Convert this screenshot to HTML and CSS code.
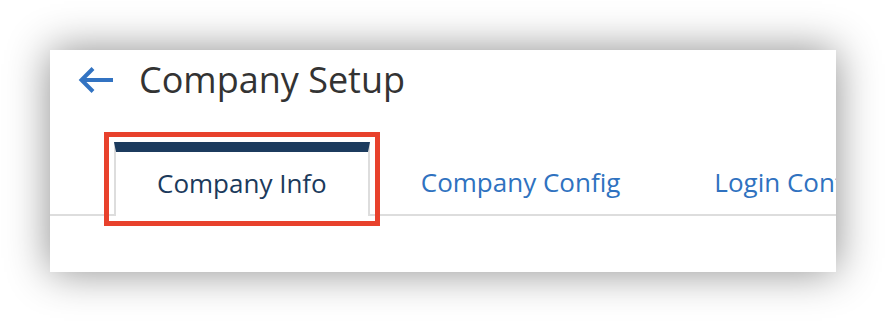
FILE: index.html
```html
<!DOCTYPE html>
<html>
<head>
<meta charset="utf-8">
<link rel="stylesheet" href="styles.css">
</head>
<body>
<div class="card">
  <div class="header">
    <svg class="back" width="36" height="28" viewBox="0 0 36 28" aria-hidden="true">
      <path d="M35 14H4M15 2.5L3.5 14L15 25.5" fill="none" stroke="#3273c2" stroke-width="4" stroke-linecap="butt" stroke-linejoin="miter"/>
    </svg>
    <h1 class="title">Company Setup</h1>
  </div>
  <div class="tabs">
    <div class="tab active">Company Info</div>
    <div class="tab">Company Config</div>
    <div class="tab">Login Configuration</div>
  </div>
</div>
</body>
</html>
```
FILE: styles.css
```css
html, body {
  margin: 0;
  padding: 0;
  background: #ffffff;
}
body {
  padding: 50px;
  font-family: "Open Sans", "Noto Sans", sans-serif;
  overflow: hidden;
  height: 322px;
  box-sizing: border-box;
}
.card {
  width: 786px;
  height: 222px;
  background: #fff;
  box-shadow: 0 0 40px rgba(0,0,0,0.45);
  overflow: hidden;
  box-sizing: border-box;
}
.header {
  display: flex;
  align-items: center;
  height: 60px;
  padding-left: 28px;
}
.back {
  display: block;
  flex: none;
}
.title {
  margin: 0 0 0 25px;
  font-weight: 400;
  font-size: 36px;
  color: #333333;
  line-height: 1;
}
.tabs {
  display: flex;
  gap: 8px;
  margin-top: 32px;
  padding-left: 64px;
  border-bottom: 2px solid #dddddd;
  height: 72px;
  white-space: nowrap;
}
.tab {
  padding: 0 41px 3px;
  font-size: 26px;
  color: #2f72c0;
  display: flex;
  align-items: center;
  border-top: 10px solid transparent;
  border-left: 2px solid transparent;
  border-right: 2px solid transparent;
  flex: none;
}
.active {
  color: #1b3a5c;
  border-top-color: #1c3b5e;
  border-left-color: #dddddd;
  border-right-color: #dddddd;
  background: #fff;
  margin-bottom: -2px;
  outline: 5px solid #e8412c;
  outline-offset: 5px;
}
```
